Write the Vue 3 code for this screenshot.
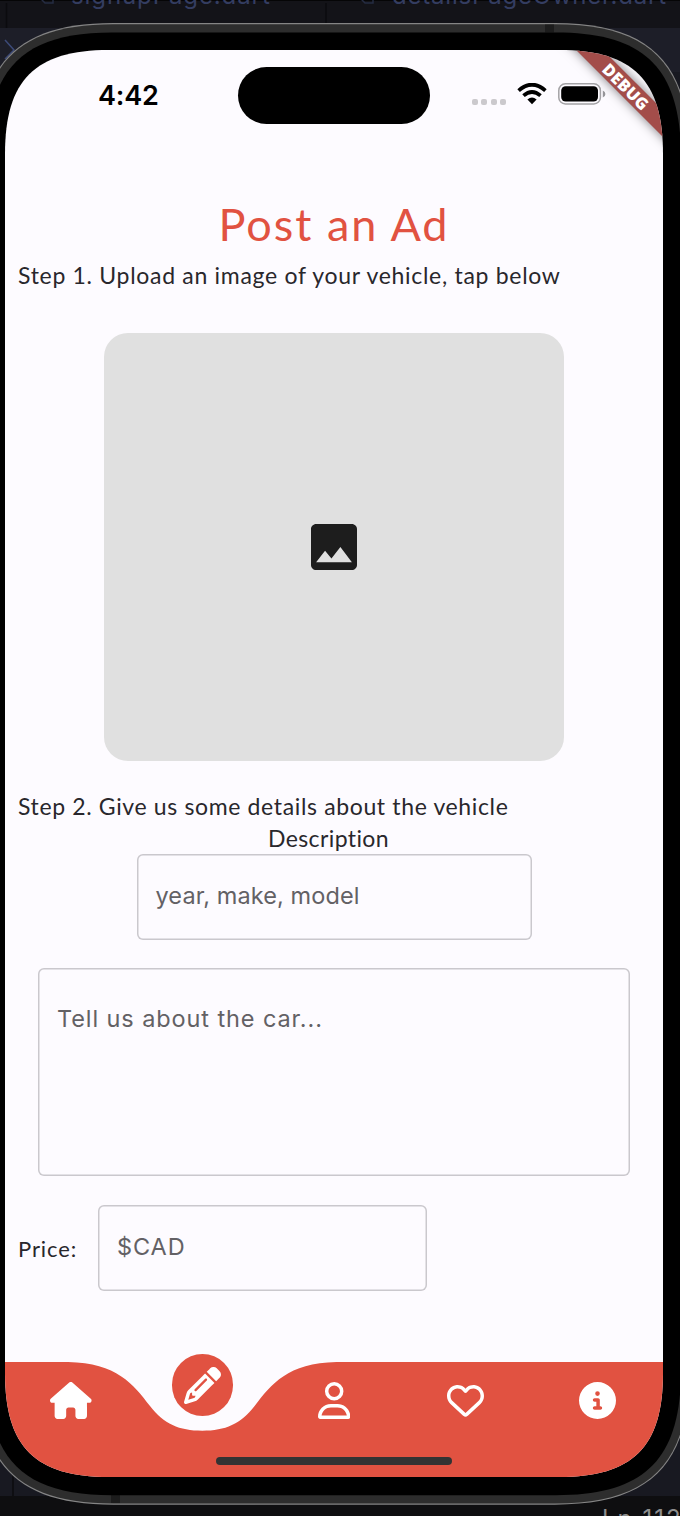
<script setup>
const navIcons = [
  {
    name: 'home', box: '0 0 576 512', w: 41.6, h: 37,
    d: 'M575.8 255.5c0 18-15 32.1-32 32.1h-32l.7 160.2c0 2.7-.2 5.4-.5 8.1V472c0 22.1-17.9 40-40 40H456c-1.1 0-2.2 0-3.3-.1c-1.4 .1-2.8 .1-4.2 .1H416 392c-22.1 0-40-17.9-40-40V448 384c0-17.7-14.3-32-32-32H256c-17.7 0-32 14.3-32 32v64 24c0 22.1-17.9 40-40 40H160 128.1c-1.5 0-3-.1-4.5-.2c-1.2 .1-2.4 .2-3.6 .2H104c-22.1 0-40-17.9-40-40V360c0-.9 0-1.9 .1-2.8V287.6H32c-18 0-32-14-32-32.1c0-9 3-17 10-24L266.4 8c7-7 15-8 22-8s15 2 21 7L564.8 231.5c8 7 12 15 11 24z'
  },
  {
    name: 'edit', box: '0 0 512 512', w: 37, h: 37, active: true,
    d: 'M410.3 231l11.3-11.3-33.9-33.9-62.1-62.1L291.7 89.8l-11.3 11.3-22.6 22.6L58.6 322.9c-10.4 10.4-18 23.3-22.2 37.4L1 480.7c-2.5 8.4-.2 17.5 6.1 23.7s15.3 8.5 23.7 6.1l120.3-35.4c14.1-4.2 27-11.8 37.4-22.2L387.7 253.7 410.3 231zM160 399.4l-9.1 22.7c-4 3.1-8.5 5.4-13.3 6.9L59.4 452l23-78.1c1.4-4.9 3.8-9.4 6.9-13.3l22.7-9.1v32c0 8.8 7.2 16 16 16h32zM362.7 18.7L348.3 33.2 325.7 55.8 314.3 67.1l33.9 33.9 62.1 62.1 33.9 33.9 11.3-11.3 22.6-22.6 14.5-14.5c25-25 25-65.5 0-90.5L453.3 18.7c-25-25-65.5-25-90.5 0zm-47.4 168l-144 144c-6.2 6.2-16.4 6.2-22.6 0s-6.2-16.4 0-22.6l144-144c6.2-6.2 16.4-6.2 22.6 0s6.2 16.4 0 22.6z'
  },
  {
    name: 'user', box: '0 0 448 512', w: 32.4, h: 37,
    d: 'M304 128a80 80 0 1 0 -160 0 80 80 0 1 0 160 0zM96 128a128 128 0 1 1 256 0A128 128 0 1 1 96 128zM49.3 464H398.7c-8.9-63.3-63.3-112-129-112H178.3c-65.7 0-120.1 48.7-129 112zM0 482.3C0 383.8 79.8 304 178.3 304h91.4C368.2 304 448 383.8 448 482.3c0 16.4-13.3 29.7-29.7 29.7H29.7C13.3 512 0 498.7 0 482.3z'
  },
  {
    name: 'heart', box: '0 0 512 512', w: 37, h: 37,
    d: 'M225.8 468.2l-2.5-2.3L48.1 303.2C17.4 274.7 0 234.7 0 192.8v-3.3c0-70.4 50-130.8 119.2-144C158.6 37.9 198.9 47 231 69.6c9 6.4 17.4 13.8 25 22.3c4.2-4.8 8.7-9.2 13.5-13.3c3.7-3.2 7.5-6.2 11.5-9c0 0 0 0 0 0C313.1 47 353.4 37.9 392.8 45.4C462 58.6 512 119.1 512 189.5v3.3c0 41.9-17.4 81.9-48.1 110.4L288.7 465.9l-2.5 2.3c-8.2 7.6-19 11.9-30.2 11.9s-22-4.2-30.2-11.9zM239.1 145c-.4-.3-.7-.7-1-1.1l-17.8-20c0 0-.1-.1-.1-.1c0 0 0 0 0 0c-23.1-25.9-58-37.7-92-31.2C81.6 101.5 48 142.1 48 189.5v3.3c0 28.5 11.9 55.8 32.8 75.2L256 430.7 431.2 268c20.9-19.4 32.8-46.7 32.8-75.2v-3.3c0-47.3-33.6-88-80.1-96.9c-34-6.5-69 5.4-92 31.2c0 0 0 0-.1 .1s0 0-.1 .1l-17.8 20c-.3 .4-.7 .7-1 1.1c-4.5 4.5-10.6 7-16.9 7s-12.4-2.5-16.9-7z'
  },
  {
    name: 'info', box: '0 0 512 512', w: 37, h: 37,
    d: 'M256 512A256 256 0 1 0 256 0a256 256 0 1 0 0 512zM216 336h24V272H216c-13.3 0-24-10.7-24-24s10.7-24 24-24h48c13.3 0 24 10.7 24 24v88h8c13.3 0 24 10.7 24 24s-10.7 24-24 24H216c-13.3 0-24-10.7-24-24s10.7-24 24-24zm40-208a32 32 0 1 1 0 64 32 32 0 1 1 0-64z'
  }
]

// Rounded rectangle with continuous (squircle-like) corners.
function squircle(l, t, r, b, e, c) {
  return `M${l} ${t + e}C${l} ${t + c} ${l + c} ${t} ${l + e} ${t}H${r - e}C${r - c} ${t} ${r} ${t + c} ${r} ${t + e}` +
    `V${b - e}C${r} ${b - c} ${r - c} ${b} ${r - e} ${b}H${l + e}C${l + c} ${b} ${l} ${b - c} ${l} ${b - e}Z`
}
const edge = squircle(-22, 23, 690, 1504.7, 135, 40)
const band = squircle(-21, 24.3, 689, 1503.4, 134, 39.5)
const bezel = squircle(-13, 32.4, 681, 1495.3, 125, 36)
</script>

<template>
  <div class="desktop">
    <div class="tabs">
      <svg class="tab-icon" width="14" height="14" viewBox="0 0 14 14"><path d="M1 1v8l3 3h8V1" /></svg>
      <span class="tab first">signupPage.dart</span>
      <svg class="tab-icon second" width="14" height="14" viewBox="0 0 14 14"><path d="M1 1v8l3 3h8V1" /></svg>
      <span class="tab last">detailsPageOwner.dart</span>
    </div>
    <div class="status-line">Ln 112</div>
    <svg class="frame" width="680" height="1516" viewBox="0 0 680 1516">
      <path d="M6.500 3V28M326 3V24M13 1470V1496" fill="none" stroke="#0b0b0e" stroke-width="1.500" />
      <path d="M5 40L14 50L5 59" fill="none" stroke="#3c4a78" stroke-width="1.5" />
      <path :d="edge" fill="#858585" />
      <path :d="band" fill="#2d2d2d" />
      <path d="M545 24.5h9v8h-9zM111 1495h9v8h-9z" fill="#1c1c1c" />
      <path :d="bezel" fill="#000" />
    </svg>

    <main class="screen">
      <header class="statusbar">
        <span class="time">4:42</span>
        <span class="island"></span>
        <span class="indicators">
          <span class="dots"><i></i><i></i><i></i><i></i></span>
          <svg class="wifi" width="30" height="22" viewBox="0 0 30 22">
            <path d="M1.600 7.600Q15 -4.200 28.400 7.600M6.500 12.600Q15 5.200 23.500 12.600" fill="none" stroke="#000" stroke-width="3.8" />
            <path d="M10.400 16.600Q15 12.600 19.600 16.600L15 21.200Z" />
          </svg>
          <svg class="battery" width="48" height="22" viewBox="0 0 48 22">
            <rect x="0.8" y="0.8" width="41.6" height="20.2" rx="6.6" fill="none" stroke="#a3a2a5" stroke-width="1.5" />
            <rect x="3.2" y="3.3" width="36.8" height="15.2" rx="4.4" />
            <path d="M44.8 7.4Q47.4 8.4 47.4 11T44.8 14.6Z" fill="#97969a" />
          </svg>
        </span>
      </header>

      <section class="content">
        <h1>Post an Ad</h1>
        <p class="step one">Step 1. Upload an image of your vehicle, tap below</p>
        <div class="picker">
          <svg width="46" height="46" viewBox="3 3 18 18"><path d="M21 19V5c0-1.1-.9-2-2-2H5c-1.1 0-2 .9-2 2v14c0 1.1.9 2 2 2h14c1.1 0 2-.9 2-2zM8.5 13.5l2.5 3.01L14.5 12l4.5 6H5l3.5-4.5z" /></svg>
        </div>
        <p class="step two">Step 2. Give us some details about the vehicle</p>
        <p class="label">Description</p>
        <div class="field model"><span>year, make, model</span></div>
        <div class="field about"><span>Tell us about the car...</span></div>
        <div class="price">
          <span class="price-label">Price:</span>
          <div class="field cad"><span>$CAD</span></div>
        </div>
      </section>

      <nav>
        <svg class="wave" width="658" height="115" viewBox="5 1362 658 115">
          <path d="M5 1362H68C117 1363 133 1384 150 1406C164 1424 179 1430.700 202.300 1430.700S240.600 1424 254.600 1406C271.600 1384 287.600 1363 336.600 1362H663V1477H5Z" />
        </svg>
        <div v-for="icon in navIcons" :key="icon.name" class="item" :class="{ active: icon.active }">
          <svg :width="icon.w" :height="icon.h" :viewBox="icon.box"><path :d="icon.d" /></svg>
        </div>
        <span class="home-bar"></span>
      </nav>

      <div class="debug">DEBUG</div>
    </main>
  </div>
</template>

<style>
body { margin: 0; background: #121217; }
</style>

<style scoped>
* { box-sizing: border-box; }
.desktop {
  position: relative;
  width: 680px;
  height: 1516px;
  overflow: hidden;
  padding: 50px 17px 0 5px;
  background: linear-gradient(#131318 0 28px, #1d1e28 28px 72px, #181921 72px 1496px, #0e0e10 1496px);
  font-family: Inter, "Liberation Sans", sans-serif;
}
.tabs {
  position: absolute;
  inset: 0 0 auto 0;
  height: 28px;
  border-top: 1px solid #050506;
  color: #343d61;
  font-size: 24px;
  line-height: 24px;
}
.tab { position: absolute; top: -17px; white-space: nowrap; }
.first { left: 71px; letter-spacing: 0.9px; }
.last { left: 392px; letter-spacing: 0.8px; }
.tab-icon { position: absolute; left: 41px; top: -10px; fill: none; stroke: #252c42; stroke-width: 1.5; }
.tab-icon.second { left: 361px; }
.status-line {
  position: absolute;
  left: 602px;
  top: 1505px;
  font-size: 24px;
  line-height: 28px;
  letter-spacing: 2px;
  white-space: nowrap;
  color: #8d8d8d;
}
.frame { position: absolute; left: 0; top: 0; }
.screen {
  position: relative;
  display: flex;
  flex-direction: column;
  width: 658px;
  height: 1427px;
  background: #fdfbff;
  clip-path: path("M0 104C0 30 30 0 104 0H554C628 0 658 30 658 104V1323C658 1397 628 1427 554 1427H104C30 1427 0 1397 0 1323Z");
}
.statusbar {
  display: grid;
  grid-template-columns: 233px 192px 1fr;
  height: 90px;
  padding-top: 17px;
}
.time {
  padding: 1px 0 0 93px;
  font-size: 27px;
  font-weight: 600;
  line-height: 56px;
  letter-spacing: -0.2px;
  color: #000;
}
.island { height: 57px; border-radius: 29px; background: #000; }
.indicators { display: flex; align-items: flex-start; padding-left: 42px; }
.dots { display: flex; gap: 3.7px; margin-top: 31.5px; }
.dots i { width: 5.8px; height: 6px; border-radius: 2px; background: #cbc9cd; }
.wifi { margin: 16px 0 0 10.5px; }
.battery { margin: 16px 0 0 11.5px; }
.content {
  flex: 1;
  display: flex;
  flex-direction: column;
  align-items: center;
  font-family: Lato, "Open Sans", sans-serif;
  color: #29272c;
}
h1 {
  margin: 54px 0 0;
  font-size: 45px;
  font-weight: 400;
  line-height: 60px;
  letter-spacing: 2px;
  color: #e15241;
}
p { margin: 0; white-space: nowrap; }
.step { align-self: flex-start; padding-left: 13px; font-size: 23px; line-height: 32px; }
.one { margin-top: 5px; letter-spacing: 0.7px; }
.picker {
  display: flex;
  align-items: center;
  justify-content: center;
  width: 460px;
  height: 428px;
  margin-top: 42.4px;
  border-radius: 24px;
  background: #e0e0e0;
  fill: #1d1d1d;
}
.two { margin-top: 28.6px; letter-spacing: 0.64px; }
.label { font-size: 23px; line-height: 32px; letter-spacing: 0.4px; padding-right: 11px; }
.field {
  box-shadow: inset 0 0 0 1.5px #cac8cd;
  border-radius: 6px;
  padding-left: 19px;
  font-family: Inter, "Liberation Sans", sans-serif;
  font-size: 23.5px;
  line-height: 30px;
  letter-spacing: 0.9px;
  color: #636165;
}
.model { width: 395px; height: 86px; margin-top: 0; padding-top: 27px; letter-spacing: 0.1px; }
.about { width: 592px; height: 208px; margin-top: 28.500px; padding-top: 36px; }
.price { align-self: flex-start; display: flex; align-items: center; margin-top: 29px; padding-left: 13px; }
.price-label { width: 80px; font-size: 22px; letter-spacing: 0.9px; }
.cad { width: 329px; height: 86px; padding-top: 27px; }
nav { position: relative; display: flex; height: 115px; }
.wave { position: absolute; left: 0; top: 0; fill: #e15241; }
.item {
  position: relative;
  flex: 1;
  display: flex;
  justify-content: center;
  align-items: flex-start;
  padding-top: 20px;
}
.item svg { fill: #fff; }
.active {
  flex: 0 0 61.4px;
  height: 61.4px;
  margin: -7.6px 35.1px 0;
  padding: 0;
  align-items: center;
  border-radius: 50%;
  background: #e15241;
}
.home-bar {
  position: absolute;
  left: 211px;
  bottom: 12px;
  width: 236px;
  height: 8px;
  border-radius: 4px;
  background: #333;
}
.debug {
  position: absolute;
  left: 541px;
  top: 27px;
  width: 160px;
  height: 19px;
  transform: rotate(45deg);
  background: #a34d4a;
  box-shadow: 0 0 11px rgba(0, 0, 0, 0.5);
  text-align: center;
  font-family: "Open Sans", sans-serif;
  font-size: 16.500px;
  font-weight: 800;
  line-height: 19px;
  letter-spacing: 0.2px;
  color: #fff;
}
</style>
